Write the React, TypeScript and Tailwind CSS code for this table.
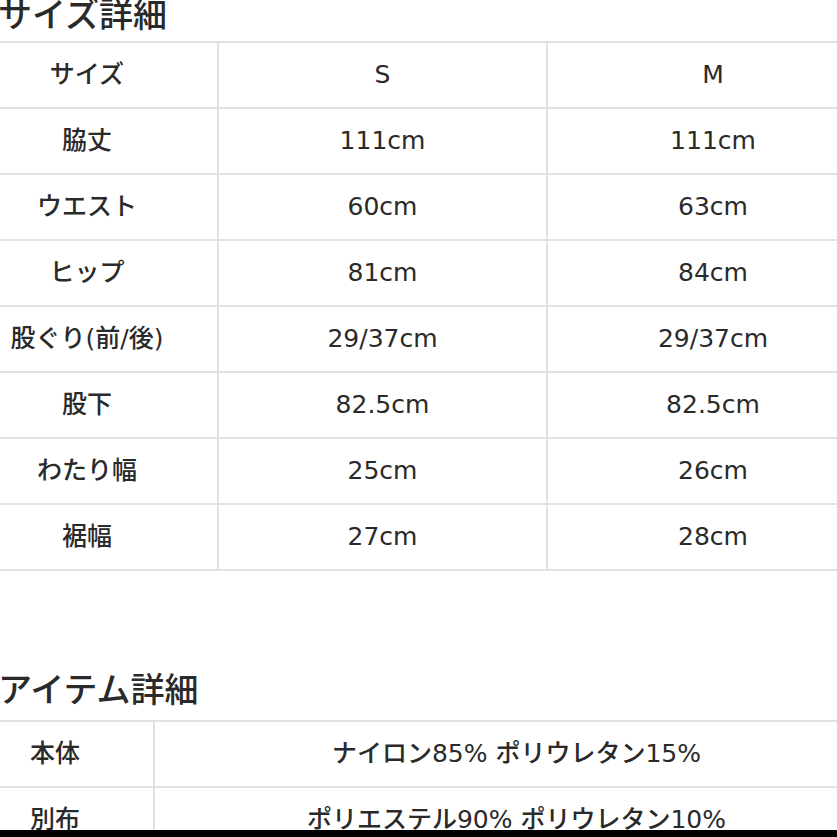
const sizeRows: [string, string, string][] = [
  ["サイズ", "S", "M"],
  ["脇丈", "111cm", "111cm"],
  ["ウエスト", "60cm", "63cm"],
  ["ヒップ", "81cm", "84cm"],
  ["股ぐり(前/後)", "29/37cm", "29/37cm"],
  ["股下", "82.5cm", "82.5cm"],
  ["わたり幅", "25cm", "26cm"],
  ["裾幅", "27cm", "28cm"],
];

const itemRows: [string, string][] = [
  ["本体", "ナイロン85% ポリウレタン15%"],
  ["別布", "ポリエステル90% ポリウレタン10%"],
];

const font = { fontFamily: '"DejaVu Sans", "Noto Sans CJK JP", sans-serif' };
const titleFont = { fontFamily: '"Noto Sans CJK JP", sans-serif' };

export default function App() {
  return (
    <div className="w-[837px] h-[837px] bg-white flex flex-col overflow-hidden text-[#2a2a2a]" style={font}>
      <div className="h-[830px] overflow-hidden flex flex-col">
        {/* サイズ詳細 */}
        <div className="h-[41px] flex flex-col shrink-0">
          <div className="-mt-[4px] -ml-[2px] text-[34px] leading-[34px] font-medium whitespace-nowrap" style={titleFont}>
            サイズ詳細
          </div>
        </div>
        <div className="-ml-[43px] w-[923px] shrink-0 grid grid-cols-[262px_329px_332px] border-t-2 border-[#e2e2e2]">
          {sizeRows.map((row, i) =>
            row.map((cell, j) => (
              <div
                key={`${i}-${j}`}
                className="h-[66px] flex items-center justify-center border-b-2 border-r-2 border-[#e2e2e2] text-[25px] font-medium whitespace-nowrap"
              >
                {cell}
              </div>
            ))
          )}
        </div>

        {/* アイテム詳細 */}
        <div className="mt-[100px] h-[49px] flex flex-col shrink-0">
          <div className="-ml-[2px] text-[34px] leading-[34px] font-medium whitespace-nowrap" style={titleFont}>
            アイテム詳細
          </div>
        </div>
        <div className="-ml-[43px] w-[923px] shrink-0 grid grid-cols-[198px_725px] border-t-2 border-[#e2e2e2]">
          {itemRows.map((row, i) =>
            row.map((cell, j) => (
              <div
                key={`${i}-${j}`}
                className="h-[66px] flex items-center justify-center border-b-2 border-r-2 border-[#e2e2e2] text-[25px] font-medium whitespace-nowrap"
              >
                {cell}
              </div>
            ))
          )}
        </div>
      </div>
      <div className="h-[7px] bg-black shrink-0" />
    </div>
  );
}
